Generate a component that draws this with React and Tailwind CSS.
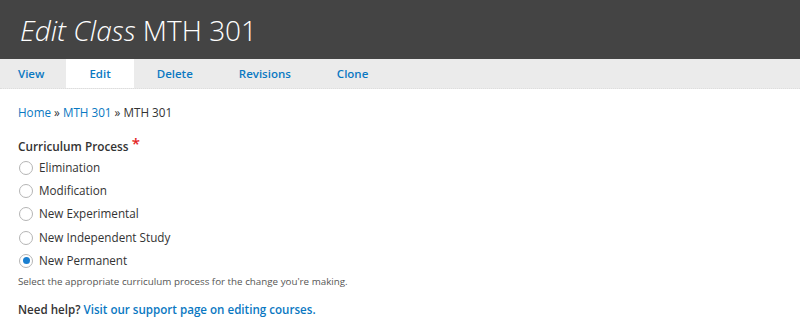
const options = [
  "Elimination",
  "Modification",
  "New Experimental",
  "New Independent Study",
  "New Permanent",
];

const tabs = ["View", "Edit", "Delete", "Revisions", "Clone"];

export default function App() {
  return (
    <div className="w-[800px] h-[325px] bg-white text-[#333] font-['Open_Sans',sans-serif] overflow-hidden">
      <div className="h-[59px] bg-[#444444] px-[20px] flex items-center">
        <h1 className="text-[28px] font-light text-white leading-none">
          <em>Edit Class</em> MTH 301
        </h1>
      </div>
      <div className="h-[30px] bg-[#ebebeb] flex border-b border-dotted border-[#ddd]">
        {tabs.map((t, i) => (
          <a
            key={t}
            className={`flex items-center text-[11.5px] font-semibold text-[#0a78c2] ${i === 0 ? "pl-[18px] pr-[22px]" : "px-[23px]"} ${t === "Edit" ? "bg-white" : ""}`}
          >
            {t}
          </a>
        ))}
      </div>
      <div className="px-[18px] pt-[15px]">
        <div className="text-[11.7px] leading-[17px]">
          <a className="text-[#0a78c2]">Home</a> » <a className="text-[#0a78c2]">MTH 301</a> » MTH 301
        </div>
        <div className="mt-[16px] text-[11.8px] font-semibold leading-[17px]">
          Curriculum Process <span className="text-[#e32222] text-[15px] relative top-[-2px]">*</span>
        </div>
        <div className="mt-[1px] flex flex-col">
          {options.map((o) => {
            const checked = o === "New Permanent";
            return (
              <label key={o} className="h-[23.3px] flex items-center gap-[6px] text-[11.7px]">
                <span className="w-[14px] h-[14px] rounded-full border border-[#b5b5b5] bg-white flex items-center justify-center shrink-0 ml-[1px]">
                  {checked && <span className="w-[7px] h-[7px] rounded-full bg-[#1a7fd0]" />}
                </span>
                {o}
              </label>
            );
          })}
        </div>
        <div className="mt-[3px] text-[9.8px] text-[#555] leading-[14px]">
          Select the appropriate curriculum process for the change you're making.
        </div>
        <div className="mt-[12px] text-[11.6px] font-semibold leading-[17px]">
          Need help? <a className="text-[#0a78c2]">Visit our support page on editing courses.</a>
        </div>
      </div>
    </div>
  );
}
